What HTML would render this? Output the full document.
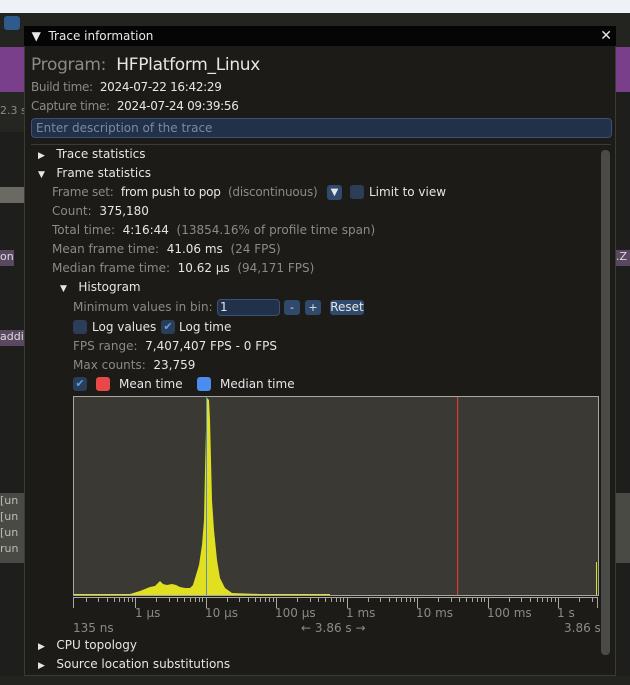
<!DOCTYPE html>
<html><head><meta charset="utf-8"><style>
*{margin:0;padding:0;box-sizing:border-box}
body{width:630px;height:685px;overflow:hidden;background:#1e1e1c;font-family:"DejaVu Sans","Liberation Sans",sans-serif;font-size:12px;color:#e6e6e6;position:relative}
.a{position:absolute;white-space:nowrap}
.g{color:#8b8a84}
.cb{position:absolute;width:14px;height:14px;border-radius:3px;background:#2b3d57}
.btn{position:absolute;height:15px;border-radius:3px;background:#2f4a6c;color:#e6e6e6;font-size:11px;text-align:center;line-height:15px}
</style></head><body>
<div class="a" style="left:0;top:0;width:630px;height:13px;background:#eef1f5"></div>
<div class="a" style="left:0;top:13px;width:630px;height:34px;background:#232320"></div>
<div class="a" style="left:4px;top:16px;width:16px;height:14px;border-radius:3px;background:#2f5b8c"></div>
<div class="a" style="left:0;top:47px;width:630px;height:45px;background:#7a3f8a"></div>
<div class="a" style="left:0;top:92px;width:24px;height:40px;background:#252522"></div>
<div class="a g" style="left:0;top:104px;font-size:11px">2.3 s</div>
<div class="a" style="left:0;top:187px;width:24px;height:16px;background:#6a6a62"></div>
<div class="a" style="left:0;top:250px;width:14px;height:16px;background:#5a4860;font-size:11px;color:#ddd">on</div>
<div class="a" style="left:0;top:330px;width:24px;height:16px;background:#5a4860;font-size:11px;color:#ddd">addi</div>
<div class="a" style="left:0;top:493px;width:24px;height:70px;background:#4a4a44;font-size:11px;color:#bbb;line-height:16px">[un<br>[un<br>[un<br>run</div>
<div class="a" style="left:616px;top:250px;width:14px;height:16px;background:#5a4860;font-size:11px;color:#ddd">.Z</div>
<div class="a" style="left:616px;top:493px;width:14px;height:70px;background:#4a4a44"></div>
<div class="a" style="left:0;top:676px;width:630px;height:9px;background:#232320"></div>
<div class="a" style="left:24px;top:26px;width:592px;height:650px;background:#1c1b17;border:1px solid #3a3a36"></div>
<div class="a" style="left:24px;top:26px;width:592px;height:20px;background:#050505;font-size:12px;line-height:20px;color:#e8e8e8">&nbsp;&nbsp;▼&nbsp;&nbsp;Trace information<span style="position:absolute;right:4px;font-size:14px">✕</span></div>
<div class="a" style="left:31px;top:55px;font-size:17px;letter-spacing:-0.3px"><span class="g">Program:</span>&nbsp; HFPlatform_Linux</div>
<div class="a" style="left:31px;top:80px;letter-spacing:-0.3px"><span class="g">Build time:</span>&nbsp; 2024-07-22 16:42:29</div>
<div class="a" style="left:31px;top:99px;letter-spacing:-0.3px"><span class="g">Capture time:</span>&nbsp; 2024-07-24 09:39:56</div>
<div class="a" style="left:31px;top:118px;width:581px;height:20px;background:#203149;border:1px solid #3a5272;border-radius:4px;color:#7b8aa0;font-size:12px;line-height:18px;padding-left:4px">Enter description of the trace</div>
<div class="a" style="left:31px;top:144px;width:580px;height:1px;background:#3a3a36"></div>
<div class="a" style="left:38px;top:147px"><span style="font-size:9px">▶</span>&nbsp;&nbsp; Trace statistics</div>
<div class="a" style="left:38px;top:166px"><span style="font-size:9px">▼</span>&nbsp;&nbsp; Frame statistics</div>
<div class="a" style="left:52px;top:185px;letter-spacing:-0.2px"><span class="g">Frame set:</span>&nbsp; from push to pop&nbsp; <span class="g">(discontinuous)</span></div>
<div class="btn" style="left:327px;top:185px;width:15px;font-size:10px">▼</div>
<div class="cb" style="left:350px;top:185px"></div>
<div class="a" style="left:369px;top:185px">Limit to view</div>
<div class="a" style="left:52px;top:204px"><span class="g">Count:</span>&nbsp; 375,180</div>
<div class="a" style="left:52px;top:223px"><span class="g">Total time:</span>&nbsp; 4:16:44&nbsp; <span class="g">(13854.16% of profile time span)</span></div>
<div class="a" style="left:52px;top:242px"><span class="g">Mean frame time:</span>&nbsp; 41.06 ms&nbsp; <span class="g">(24 FPS)</span></div>
<div class="a" style="left:52px;top:261px"><span class="g">Median frame time:</span>&nbsp; 10.62 µs&nbsp; <span class="g">(94,171 FPS)</span></div>
<div class="a" style="left:60px;top:280px"><span style="font-size:9px">▼</span>&nbsp;&nbsp; Histogram</div>
<div class="a g" style="left:73px;top:300px">Minimum values in bin:</div>
<div class="a" style="left:217px;top:299px;width:63px;height:17px;background:#203149;border:1px solid #3a5272;border-radius:4px;padding-left:2px;line-height:15px">1</div>
<div class="btn" style="left:284px;top:300px;width:16px">-</div>
<div class="btn" style="left:305px;top:300px;width:16px">+</div>
<div class="btn" style="left:330px;top:300px;width:34px;font-size:12px">Reset</div>
<div class="cb" style="left:73px;top:320px"></div>
<div class="a" style="left:92px;top:320px">Log values</div>
<div class="cb" style="left:161px;top:320px;color:#5aa0f0;font-size:11px;text-align:center;line-height:14px">✔</div>
<div class="a" style="left:179px;top:320px">Log time</div>
<div class="a" style="left:73px;top:339px"><span class="g">FPS range:</span>&nbsp; 7,407,407 FPS - 0 FPS</div>
<div class="a" style="left:73px;top:358px"><span class="g">Max counts:</span>&nbsp; 23,759</div>
<div class="cb" style="left:73px;top:377px;color:#5aa0f0;font-size:11px;text-align:center;line-height:14px">✔</div>
<div class="a" style="left:96px;top:377px;width:14px;height:14px;border-radius:3px;background:#e84848"></div>
<div class="a" style="left:119px;top:377px">Mean time</div>
<div class="a" style="left:197px;top:377px;width:14px;height:14px;border-radius:3px;background:#4a8cf0"></div>
<div class="a" style="left:220px;top:377px">Median time</div>
<svg class="a" style="left:0;top:0" width="630" height="685">
<rect x="73.5" y="396.5" width="525" height="199" fill="#3a3933" stroke="#a8a8a0"/>
<polygon fill="#e0e020" points="88,595 130,594 140,591 145,589 150,587 155,586 158,583 160,581 163,584 167,585 172,584 176,585 180,587 185,588 190,588 193,585 196,575 199,565 202,545 204,520 205,470 206,430 207,398 209,400 210,420 211,460 212,500 214,530 217,560 220,578 225,588 232,593 260,594 330,595"/>
<line x1="74" y1="594.5" x2="330" y2="594.5" stroke="#e0e020"/>
<line x1="206.5" y1="397" x2="206.5" y2="595" stroke="#5a8ab0"/>
<rect x="457" y="397" width="1.2" height="198" fill="#e03838"/>
<line x1="596.5" y1="562" x2="596.5" y2="595" stroke="#e0e020"/>
<g id="t" stroke="#a8a8a0"></g>
<line x1="73" y1="597.5" x2="598" y2="597.5" stroke="#a8a8a0"/>
<rect x="601" y="150" width="9" height="505" rx="4" fill="#4a4a46"/>
</svg>
<div class="a g" style="left:135px;top:606px">1 µs</div>
<div class="a g" style="left:205px;top:606px">10 µs</div>
<div class="a g" style="left:275px;top:606px">100 µs</div>
<div class="a g" style="left:346px;top:606px">1 ms</div>
<div class="a g" style="left:416px;top:606px">10 ms</div>
<div class="a g" style="left:487px;top:606px">100 ms</div>
<div class="a g" style="left:557px;top:606px">1 s</div>
<div class="a g" style="left:73px;top:621px">135 ns</div>
<div class="a g" style="left:301px;top:621px">← 3.86 s →</div>
<div class="a g" style="left:564px;top:621px">3.86 s</div>
<div class="a" style="left:38px;top:638px"><span style="font-size:9px">▶</span>&nbsp;&nbsp; CPU topology</div>
<div class="a" style="left:38px;top:657px;height:13px;overflow:hidden"><span style="font-size:9px">▶</span>&nbsp;&nbsp; Source location substitutions</div>
<script>
var g=document.getElementById('t'),s='';
for(var d=-1;d<7;d++){var b=135+70.5*d;
for(var k=1;k<10;k++){var x=b+70.5*Math.log10(k);if(x<73||x>598)continue;var h=k==1?10:4;
s+='<line x1="'+(Math.round(x)+.5)+'" y1="598" x2="'+(Math.round(x)+.5)+'" y2="'+(598+h)+'"/>';}}
s+='<line x1="73.5" y1="598" x2="73.5" y2="608"/><line x1="597.5" y1="598" x2="597.5" y2="608"/>';
g.innerHTML=s;
</script>
</body></html>
